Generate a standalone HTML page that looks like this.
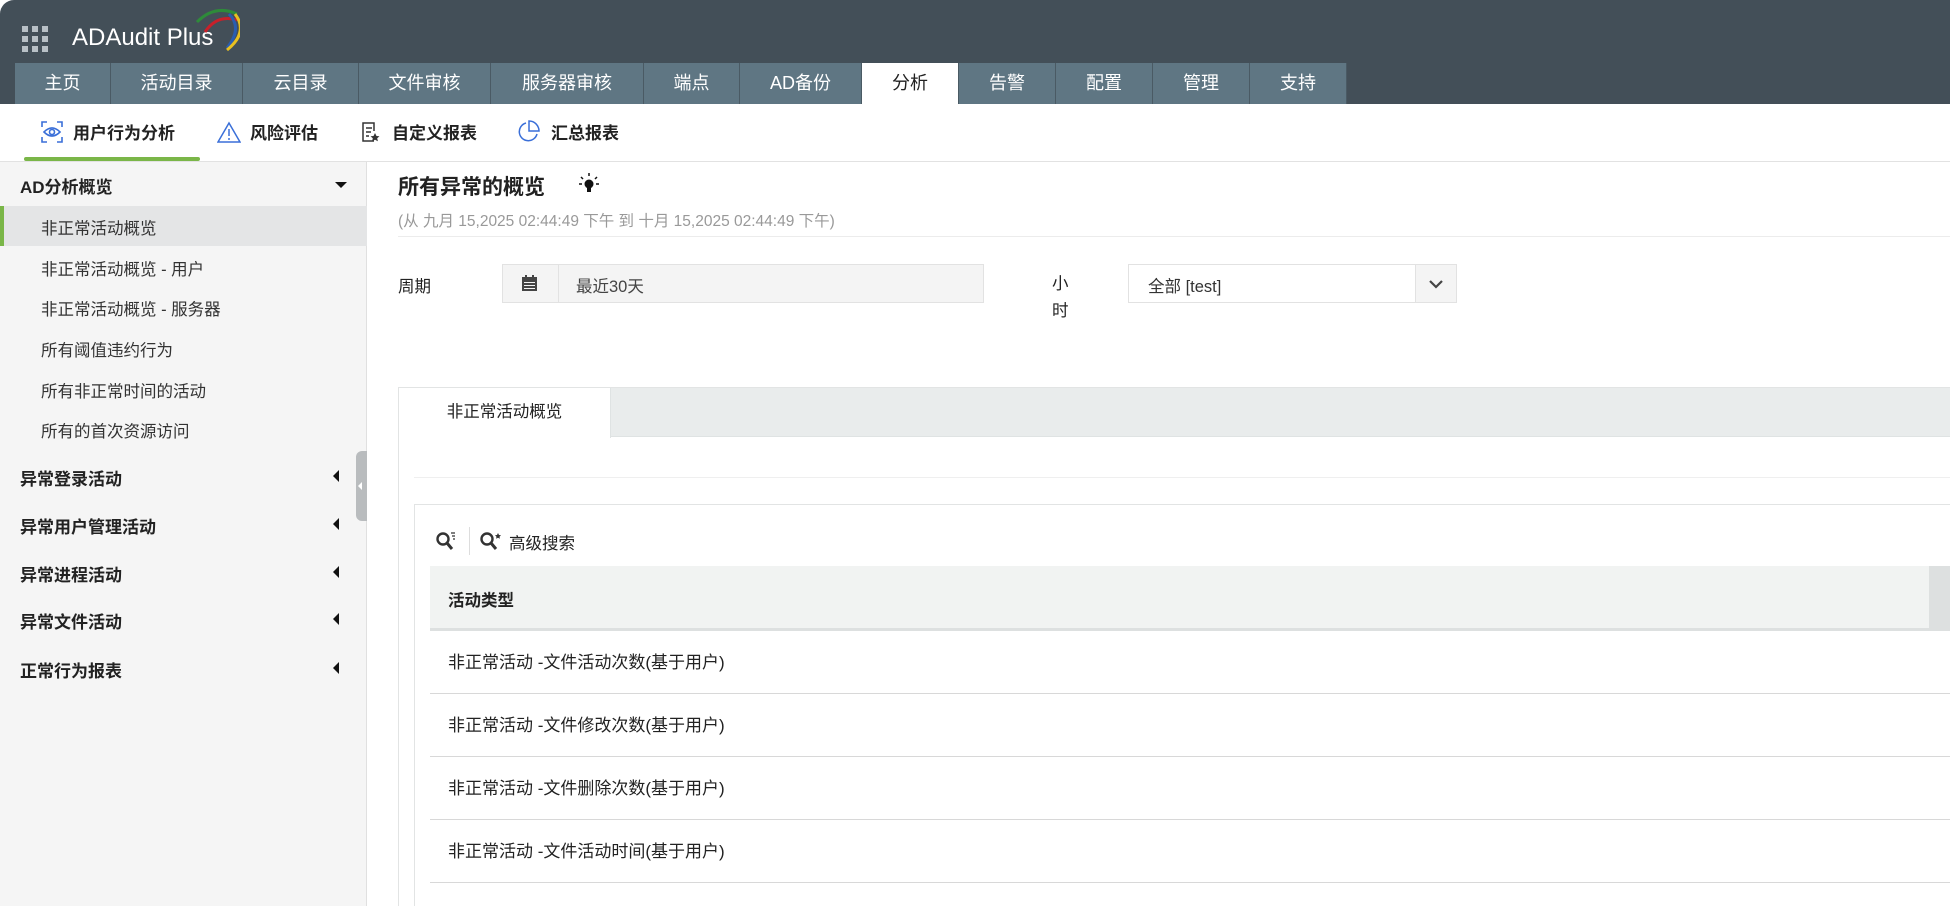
<!DOCTYPE html>
<html><head><meta charset="utf-8"><style>
*{box-sizing:border-box;margin:0;padding:0}
body{width:1950px;height:906px;overflow:hidden;background:#fff;font-family:"Liberation Sans","Noto Sans CJK SC",sans-serif;color:#222;position:relative}
.abs{position:absolute}
#hdr{left:0;top:0;width:1950px;height:104px;background:#434f58;border-top-left-radius:14px}
.tab{position:absolute;top:63px;height:41px;background:#5f7683;color:#fff;font-size:18px;line-height:41px;text-align:center;border-right:1px solid #4a5a64}
.tab.act{background:#fff;color:#222}
.sub{position:absolute;top:119px;font-size:17px;font-weight:bold;color:#222}
.sb{position:absolute;left:41px;font-size:16.5px;color:#333}
.sg{position:absolute;left:20px;font-size:17px;font-weight:bold;color:#222}
.lc{position:absolute;left:333px;width:0;height:0;border-top:6px solid transparent;border-bottom:6px solid transparent;border-right:6px solid #111}
.row{position:absolute;left:430px;width:1520px;height:63px;border-bottom:1px solid #d8d8d8;font-size:17px;line-height:63px;padding-left:18px}
</style></head><body>
<div id="hdr" class="abs"></div>
<svg class="abs" style="left:22px;top:26px" width="28" height="28"><g fill="#b8c0c6"><rect x="0" y="0" width="6" height="6"/><rect x="10" y="0" width="6" height="6"/><rect x="20" y="0" width="6" height="6"/><rect x="0" y="10" width="6" height="6"/><rect x="10" y="10" width="6" height="6"/><rect x="20" y="10" width="6" height="6"/><rect x="0" y="20" width="6" height="6"/><rect x="10" y="20" width="6" height="6"/><rect x="20" y="20" width="6" height="6"/></g></svg>
<div class="abs" style="left:72px;top:24px;color:#fff;font-size:24px">ADAudit Plus</div>
<svg class="abs" style="left:145px;top:8px" width="95" height="44"><path d="M60 24 Q72 6 92 12" stroke="#c8202a" stroke-width="3" fill="none"/><path d="M58 18 Q76 0 98 10" stroke="#2e8b3a" stroke-width="3" fill="none" transform="translate(-6,-4)"/><path d="M88 6 Q102 20 86 40" stroke="#2a5db0" stroke-width="3" fill="none" transform="translate(-4,0)"/><path d="M92 8 Q106 26 84 44" stroke="#e8c020" stroke-width="3" fill="none" transform="translate(-2,-2)"/></svg>
<div class="tab" style="left:15px;width:96px">主页</div>
<div class="tab" style="left:111px;width:132px">活动目录</div>
<div class="tab" style="left:243px;width:116px">云目录</div>
<div class="tab" style="left:359px;width:132px">文件审核</div>
<div class="tab" style="left:491px;width:153px">服务器审核</div>
<div class="tab" style="left:644px;width:96px">端点</div>
<div class="tab" style="left:740px;width:122px">AD备份</div>
<div class="tab act" style="left:862px;width:97px">分析</div>
<div class="tab" style="left:959px;width:97px">告警</div>
<div class="tab" style="left:1056px;width:97px">配置</div>
<div class="tab" style="left:1153px;width:97px">管理</div>
<div class="tab" style="left:1250px;width:97px">支持</div>
<!-- subnav -->
<svg class="abs" style="left:41px;top:121px" width="22" height="22" fill="none" stroke="#3a6fd8" stroke-width="1.6"><path d="M1 6V1h5M16 1h5v5M21 16v5h-5M6 21H1v-5"/><path d="M3 11Q11 3 19 11Q11 19 3 11Z"/><circle cx="11" cy="11" r="2.5"/></svg>
<div class="sub" style="left:73px">用户行为分析</div>
<svg class="abs" style="left:217px;top:121px" width="24" height="22" fill="none" stroke="#3a6fd8" stroke-width="1.5"><path d="M12 2L23 21H1Z"/><path d="M12 8v7M12 17v2"/></svg>
<div class="sub" style="left:250px">风险评估</div>
<svg class="abs" style="left:362px;top:122px" width="18" height="20" fill="none" stroke="#333" stroke-width="1.5"><path d="M12 19H1V1h11v8"/><path d="M4 6h6M4 10h5M4 14h3"/><path d="M13 11l1.5 3 3 .3-2.3 2 .7 3-2.9-1.6-2.9 1.6.7-3-2.3-2 3-.3Z" fill="#333" stroke="none"/></svg>
<div class="sub" style="left:392px">自定义报表</div>
<svg class="abs" style="left:516px;top:120px" width="24" height="24" fill="none" stroke="#3a6fd8" stroke-width="1.5"><path d="M10 3A9 9 0 1 0 21 14"/><path d="M13 1v10h10A10 10 0 0 0 13 1Z"/></svg>
<div class="sub" style="left:551px">汇总报表</div>
<div class="abs" style="left:24px;top:157px;width:176px;height:4px;background:#7ab648;border-radius:2px"></div>
<div class="abs" style="left:0;top:161px;width:1950px;height:1px;background:#e2e2e2"></div>
<!-- sidebar -->
<div class="abs" style="left:0;top:162px;width:367px;height:744px;background:#f5f5f5;border-right:1px solid #e0e0e0"></div>
<div class="sg" style="top:173px">AD分析概览</div>
<div class="abs" style="left:335px;top:182px;border-left:6px solid transparent;border-right:6px solid transparent;border-top:6px solid #111"></div>
<div class="abs" style="left:0;top:206px;width:367px;height:40px;background:#e4e5e6;border-left:4px solid #7ab648"></div>
<div class="sb" style="top:215px">非正常活动概览</div>
<div class="sb" style="top:256px">非正常活动概览 - 用户</div>
<div class="sb" style="top:296px">非正常活动概览 - 服务器</div>
<div class="sb" style="top:337px">所有阈值违约行为</div>
<div class="sb" style="top:378px">所有非正常时间的活动</div>
<div class="sb" style="top:418px">所有的首次资源访问</div>
<div class="sg" style="top:465px">异常登录活动</div><div class="lc" style="top:470px"></div>
<div class="sg" style="top:513px">异常用户管理活动</div><div class="lc" style="top:518px"></div>
<div class="sg" style="top:561px">异常进程活动</div><div class="lc" style="top:566px"></div>
<div class="sg" style="top:608px">异常文件活动</div><div class="lc" style="top:613px"></div>
<div class="sg" style="top:657px">正常行为报表</div><div class="lc" style="top:662px"></div>
<div class="abs" style="left:356px;top:451px;width:11px;height:70px;background:#b9bcbe;border-radius:6px 0 0 6px"></div>
<div class="abs" style="left:358px;top:482px;border-top:4px solid transparent;border-bottom:4px solid transparent;border-right:4px solid #fff"></div>
<!-- main -->
<div class="abs" style="left:398px;top:171px;font-size:21px;font-weight:bold">所有异常的概览</div>
<svg class="abs" style="left:578px;top:172px" width="22" height="22"><g stroke="#111" stroke-width="1.5"><path d="M11 1v3M3 5l2 2M19 5l-2 2M1 12h3M18 12h3"/></g><circle cx="11" cy="12" r="4.5" fill="#111"/><rect x="9" y="16" width="4" height="4" fill="#111"/></svg>
<div class="abs" style="left:398px;top:209px;font-size:15.5px;color:#999">(从 九月 15,2025 02:44:49 下午 到 十月 15,2025 02:44:49 下午)</div>
<div class="abs" style="left:398px;top:236px;width:1552px;height:1px;background:#ececec"></div>
<div class="abs" style="left:398px;top:273px;font-size:16.5px">周期</div>
<div class="abs" style="left:502px;top:264px;width:482px;height:39px;background:#f4f4f4;border:1px solid #e2e2e2"></div>
<div class="abs" style="left:558px;top:264px;width:1px;height:39px;background:#e2e2e2"></div>
<svg class="abs" style="left:522px;top:275px" width="15" height="16"><rect x="0" y="2" width="15" height="14" fill="#444"/><rect x="3" y="0" width="2" height="4" fill="#444"/><rect x="10" y="0" width="2" height="4" fill="#444"/><g fill="#f4f4f4"><rect x="2" y="7" width="11" height="1"/><rect x="2" y="10" width="11" height="1"/><rect x="2" y="13" width="11" height="1"/></g></svg>
<div class="abs" style="left:576px;top:273px;font-size:16.5px;color:#444">最近30天</div>
<div class="abs" style="left:1052px;top:271px;font-size:16.5px;line-height:27px">小<br>时</div>
<div class="abs" style="left:1128px;top:264px;width:329px;height:39px;background:#fff;border:1px solid #e2e2e2"></div>
<div class="abs" style="left:1415px;top:264px;width:42px;height:39px;background:#f4f4f4;border:1px solid #e2e2e2"></div>
<svg class="abs" style="left:1428px;top:279px" width="16" height="10"><path d="M2 2l6 6 6-6" stroke="#444" stroke-width="2.2" fill="none"/></svg>
<div class="abs" style="left:1148px;top:273px;font-size:16.5px;color:#333">全部 [test]</div>
<!-- tabs container -->
<div class="abs" style="left:398px;top:387px;width:1552px;height:519px;border-left:1px solid #e2e4e4;border-top:1px solid #e2e4e4"></div>
<div class="abs" style="left:399px;top:388px;width:1551px;height:49px;background:#e9ecec;border-bottom:1px solid #dfe3e3"></div>
<div class="abs" style="left:399px;top:388px;width:212px;height:50px;background:#fff;border-right:1px solid #dfe3e3;font-size:16.5px;text-align:center;line-height:48px">非正常活动概览</div>
<div class="abs" style="left:414px;top:477px;width:1536px;height:1px;background:#efefef"></div>
<div class="abs" style="left:414px;top:504px;width:1536px;height:402px;border-left:1px solid #e2e4e4;border-top:1px solid #e2e4e4"></div>
<svg class="abs" style="left:435px;top:531px" width="22" height="20"><circle cx="8" cy="8" r="5.5" stroke="#333" stroke-width="2.4" fill="none"/><path d="M12 12l5 6" stroke="#333" stroke-width="3"/><path d="M16 2h4M17 5h3M18 8h2" stroke="#333" stroke-width="1.2"/></svg>
<div class="abs" style="left:469px;top:527px;width:1px;height:28px;background:#ddd"></div>
<svg class="abs" style="left:479px;top:531px" width="26" height="20"><circle cx="8" cy="8" r="5.5" stroke="#333" stroke-width="2.4" fill="none"/><path d="M12 12l5 6" stroke="#333" stroke-width="3"/><path d="M19 2l1 2 2 .3-1.5 1.4.4 2-1.9-1-1.9 1 .4-2-1.5-1.4 2-.3Z" fill="#333"/></svg>
<div class="abs" style="left:509px;top:530px;font-size:16.5px">高级搜索</div>
<div class="abs" style="left:430px;top:566px;width:1520px;height:65px;background:#f1f3f2;border-bottom:3px solid #dde0e0"></div>
<div class="abs" style="left:1929px;top:566px;width:21px;height:62px;background:#dde0e0"></div>
<div class="abs" style="left:448px;top:587px;font-size:16.5px;font-weight:bold">活动类型</div>
<div class="row" style="top:631px">非正常活动 -文件活动次数(基于用户)</div>
<div class="row" style="top:694px">非正常活动 -文件修改次数(基于用户)</div>
<div class="row" style="top:757px">非正常活动 -文件删除次数(基于用户)</div>
<div class="row" style="top:820px">非正常活动 -文件活动时间(基于用户)</div>
</body></html>
